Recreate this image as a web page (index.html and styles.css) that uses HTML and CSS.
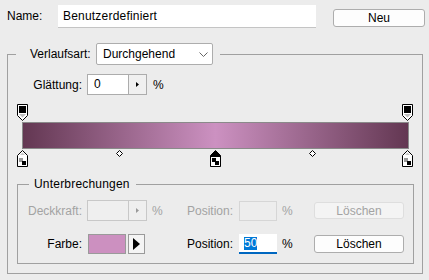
FILE: index.html
```html
<!DOCTYPE html>
<html lang="de">
<head>
  <meta charset="UTF-8" />
  <title>Verläufe bearbeiten</title>
  <link rel="stylesheet" href="styles.css">
</head>
<body>
  <div class="dialog">
    <div class="name-row">
      <span class="name-label">Name:</span>
      <div class="name-input">Benutzerdefiniert</div>
      <button class="btn btn-new">Neu</button>
    </div>

    <fieldset class="group outer">
      <legend class="outer-legend">
        <div class="legend-inner">
          <span class="type-label">Verlaufsart:</span>
          <div class="select">
            <span>Durchgehend</span>
            <svg class="chevron" width="9" height="5" viewBox="0 0 9 5"><polyline points="0.5,0.5 4.5,4.5 8.5,0.5" fill="none" stroke="#666" stroke-width="1"/></svg>
          </div>
        </div>
      </legend>

      <div class="row smooth-row">
        <span class="col-outer">Glättung:</span>
        <div class="spin">
          <span class="spin-val">0</span>
          <span class="spin-btn"><svg width="3" height="5" viewBox="0 0 3 5"><polygon points="0,0 3,2.5 0,5" fill="#000"/></svg></span>
        </div>
        <span class="unit-outer">%</span>
      </div>

      <div class="editor">
        <div class="stops stops-top">
          <svg class="stop" style="left: 0%" width="11" height="17" viewBox="0 0 11 17">
            <path d="M0.5 0.5H10.5V11.5L5.5 16.5L0.5 11.5Z" fill="#fff" stroke="#000"/>
            <rect x="2" y="2" width="7" height="7" fill="#000"/>
            <path d="M2 10H9L5.5 13.5Z" fill="#bdbdbd"/>
          </svg>
          <svg class="stop" style="left: 100%" width="11" height="17" viewBox="0 0 11 17">
            <path d="M0.5 0.5H10.5V11.5L5.5 16.5L0.5 11.5Z" fill="#fff" stroke="#000"/>
            <rect x="2" y="2" width="7" height="7" fill="#000"/>
            <path d="M2 10H9L5.5 13.5Z" fill="#bdbdbd"/>
          </svg>
        </div>
        <div class="bar"></div>
        <div class="stops stops-bottom">
          <svg class="stop" style="left: 0%" width="11" height="17" viewBox="0 0 11 17">
            <path d="M0.5 16.5V5.5L5.5 0.5L10.5 5.5V16.5Z" fill="#fff" stroke="#000"/>
            <path d="M3 5H8L5.5 2.5Z" fill="#c8c8c8"/>
            <rect x="2" y="8" width="4" height="4" fill="#999"/>
            <rect x="5" y="11" width="4" height="4" fill="#000"/>
          </svg>
          <svg class="mid" style="left: 25%" width="7" height="7" viewBox="0 0 7 7"><polygon points="3.5,0.5 6.5,3.5 3.5,6.5 0.5,3.5" fill="#fff" stroke="#000"/></svg>
          <svg class="stop" style="left: 50%" width="11" height="17" viewBox="0 0 11 17">
            <path d="M0.5 16.5V5.5L5.5 0.5L10.5 5.5V16.5Z" fill="#000" stroke="#000"/>
            <rect x="1" y="7" width="9" height="9" fill="#fff"/>
            <rect x="2" y="8" width="4" height="4" fill="#000"/>
            <rect x="5" y="11" width="4" height="4" fill="#000"/>
          </svg>
          <svg class="mid" style="left: 75%" width="7" height="7" viewBox="0 0 7 7"><polygon points="3.5,0.5 6.5,3.5 3.5,6.5 0.5,3.5" fill="#fff" stroke="#000"/></svg>
          <svg class="stop" style="left: 100%" width="11" height="17" viewBox="0 0 11 17">
            <path d="M0.5 16.5V5.5L5.5 0.5L10.5 5.5V16.5Z" fill="#fff" stroke="#000"/>
            <path d="M3 5H8L5.5 2.5Z" fill="#c8c8c8"/>
            <rect x="2" y="8" width="4" height="4" fill="#999"/>
            <rect x="5" y="11" width="4" height="4" fill="#000"/>
          </svg>
        </div>
      </div>

      <fieldset class="group inner">
        <legend class="inner-legend">Unterbrechungen</legend>

        <div class="row opacity-row">
          <span class="col-inner disabled-text">Deckkraft:</span>
          <div class="spin disabled">
            <span class="spin-val"></span>
            <span class="spin-btn"><svg width="3" height="5" viewBox="0 0 3 5"><polygon points="0,0 3,2.5 0,5" fill="#9a9a9a"/></svg></span>
          </div>
          <span class="unit disabled-text">%</span>
          <span class="pos-label disabled-text">Position:</span>
          <div class="pos-input disabled"></div>
          <span class="unit-2 disabled-text">%</span>
          <button class="btn btn-del disabled" disabled>Löschen</button>
        </div>

        <div class="row color-row">
          <span class="col-inner">Farbe:</span>
          <div class="color-ctrl">
            <span class="swatch"></span>
            <span class="arrow-btn"><svg width="7" height="12" viewBox="0 0 7 12"><polygon points="0,0 7,6 0,12" fill="#000"/></svg></span>
          </div>
          <span class="unit"></span>
          <span class="pos-label">Position:</span>
          <div class="pos-input active"><span class="selected">50</span></div>
          <span class="unit-2">%</span>
          <button class="btn btn-del">Löschen</button>
        </div>
      </fieldset>
    </fieldset>
  </div>
</body>
</html>
```

FILE: styles.css
```css
body {
  margin: 0;
  background: #ececec;
  font-family: "Liberation Sans", Arial, sans-serif;
  font-size: 12px;
  color: #000;
}

.dialog {
  width: 429px;
  height: 280px;
  overflow: hidden;
}

.name-row {
  display: flex;
  align-items: flex-start;
  padding: 5px 0 0 7px;
  height: 23px;
}

.name-label {
  width: 51px;
  line-height: 23px;
}

.name-input {
  box-sizing: border-box;
  width: 258px;
  height: 23px;
  padding-left: 5px;
  background: #fff;
  border-bottom: 1px solid #c4c4c4;
  line-height: 22px;
  letter-spacing: 0.2px;
}

.btn {
  box-sizing: border-box;
  border: 1px solid #adadad;
  border-radius: 3px;
  background: #fdfdfd;
  font: inherit;
  color: #000;
  padding: 0;
  display: flex;
  align-items: center;
  justify-content: center;
}

.btn-new {
  margin: 4px 0 0 17px;
  width: 92px;
  height: 18px;
}

.group {
  margin: 0;
  padding: 0;
  border: 1px solid #a0a0a0;
  min-width: 0;
}

.outer {
  margin: 15px 0 0 7px;
  width: 414px;
  padding-bottom: 9px;
}

.outer-legend {
  margin-left: 8px;
  padding: 0 7px 0 14px;
}

.legend-inner {
  display: flex;
  align-items: center;
  height: 22px;
}

.type-label {
  width: 66px;
}

.select {
  box-sizing: border-box;
  width: 117px;
  height: 22px;
  border: 1px solid #adadad;
  border-radius: 2px;
  background: #fff;
  padding: 0 4px 0 6px;
  display: flex;
  align-items: center;
  justify-content: space-between;
}

.row {
  display: flex;
  align-items: center;
}

.smooth-row {
  margin-top: 9px;
  height: 21px;
}

.col-outer {
  width: 74px;
  text-align: right;
}

.col-inner {
  width: 64px;
  text-align: right;
}

.spin {
  box-sizing: border-box;
  margin-left: 5px;
  width: 60px;
  height: 21px;
  border: 1px solid #acacac;
  background: #fff;
  display: flex;
}

.spin-val {
  flex: 1;
  padding-left: 6px;
  line-height: 19px;
}

.spin-btn {
  box-sizing: border-box;
  width: 18px;
  border-left: 1px solid #acacac;
  background: #f0f0f0;
  display: flex;
  align-items: center;
  justify-content: center;
}

.spin.disabled {
  border-color: #c8c8c8;
  background: #efefef;
}

.spin.disabled .spin-btn {
  border-left-color: #c8c8c8;
  background: #efefef;
}

.unit-outer {
  margin-left: 6px;
}

.editor {
  margin-top: 9px;
}

.stops {
  position: relative;
  margin-left: 15px;
  width: 385px;
  height: 18px;
}

.stop {
  position: absolute;
  top: 0;
  margin-left: -6px;
}

.stops-bottom .stop {
  top: 1px;
}

.mid {
  position: absolute;
  top: 1px;
  margin-left: -3px;
}

.bar {
  margin-left: 14px;
  width: 385px;
  height: 25px;
  border: 1px solid #8a8a8a;
  background: linear-gradient(to right, #633752, #cc91c1 50%, #633752);
}

.inner {
  margin: 10px 0 0 9px;
  width: 395px;
  padding-bottom: 9px;
}

.inner-legend {
  margin-left: 11px;
  padding: 0 6px 0 5px;
  line-height: 14px;
  letter-spacing: 0.2px;
}

.opacity-row {
  margin-top: 9px;
  height: 21px;
}

.color-row {
  margin-top: 13px;
  height: 20px;
}

.disabled-text {
  color: #a3a3a3;
}

.unit {
  margin-left: 5px;
  width: 35px;
}

.pos-label {
  width: 52px;
}

.pos-input {
  box-sizing: border-box;
  width: 38px;
  height: 20px;
}

.pos-input.disabled {
  border: 1px solid #d6d6d6;
  background: #ededed;
}

.pos-input.active {
  background: #fff;
  border-bottom: 2px solid #0067c0;
  padding-left: 5px;
  display: flex;
  align-items: center;
}

.selected {
  background: #0078d7;
  color: #fff;
  line-height: 13px;
}

.unit-2 {
  margin-left: 5px;
  width: 32px;
}

.btn-del {
  width: 90px;
  height: 18px;
}

.btn-del.disabled {
  height: 17px;
  color: #a3a3a3;
  background: #f4f4f4;
  border-color: #dedede;
}

.color-ctrl {
  margin-left: 6px;
  width: 59px;
  display: flex;
  gap: 2px;
}

.swatch {
  box-sizing: border-box;
  width: 38px;
  height: 20px;
  border: 1px solid #9a9a9a;
  background: #cc90c0;
}

.arrow-btn {
  box-sizing: border-box;
  width: 17px;
  height: 20px;
  border: 1px solid #9a9a9a;
  background: #f4f4f4;
  display: flex;
  align-items: center;
  justify-content: center;
}
```
